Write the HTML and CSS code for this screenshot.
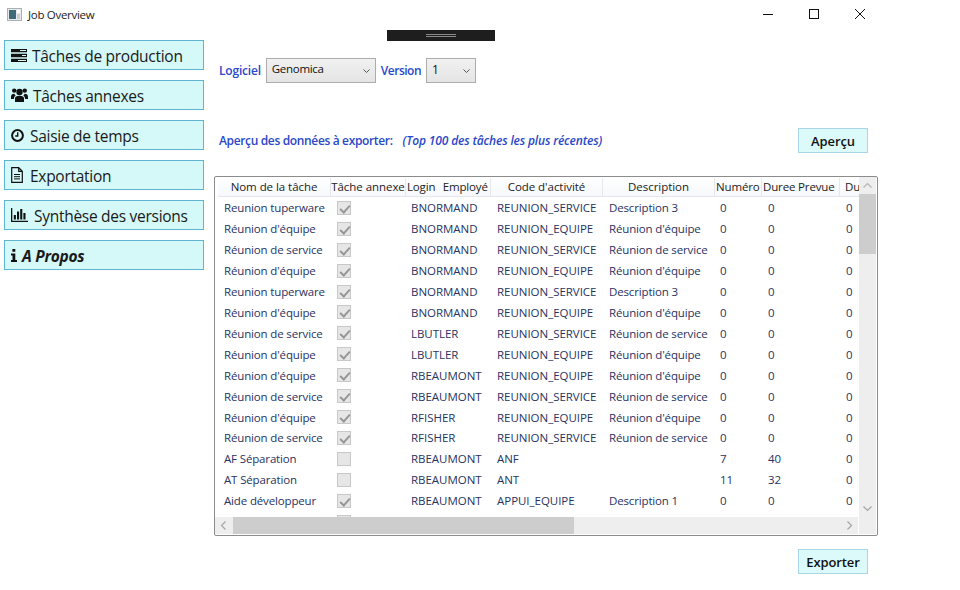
FILE: index.html
```html
<!DOCTYPE html>
<html lang="fr">
<head>
<meta charset="utf-8">
<title>Job Overview</title>
<link rel="stylesheet" href="styles.css">
</head>
<body>
<div class="window">
  <header class="titlebar">
    <svg class="app-icon" width="15" height="13" viewBox="0 0 15 13"><rect x="0.5" y="0.5" width="14" height="12" fill="#e8eaec" stroke="#a9b0b6"/><rect x="2" y="2" width="7" height="9" fill="#3f6a78"/><rect x="10" y="2" width="3" height="3" fill="#fff"/><rect x="10" y="6" width="3" height="5" fill="#c9ced2"/></svg>
    <span class="app-title">Job Overview</span>
    <div class="controls">
      <svg width="13" height="12" viewBox="0 0 13 12"><path d="M2 6.500h10" stroke="#111" fill="none"/></svg>
      <svg width="12" height="12" viewBox="0 0 12 12"><rect x="1.500" y="1.500" width="9" height="9" stroke="#111" fill="none"/></svg>
      <svg width="12" height="12" viewBox="0 0 12 12"><path d="M1 1l10 10M11 1L1 11" stroke="#111" fill="none"/></svg>
    </div>
  </header>
  <div class="grip"><span class="grip-lines"></span></div>
  <div class="content">
    <nav class="sidebar">
      <a class="nav-btn"><svg class="i" width="16" height="13" viewBox="0 0 16 13"><path fill="#111" d="M0 0h16v3.200H0zM0 4.800h16v3.400H0zM0 9.800h16V13H0z"/><path fill="#d5f8f8" d="M9 1h6v1H9zM11 6h4v1h-4zM7 11h8v1H7z"/></svg><span>Tâches de production</span></a>
      <a class="nav-btn"><svg class="i" width="17" height="16" viewBox="0 0 17 16"><circle cx="8.500" cy="5" r="3.200" fill="#111"/><circle cx="3.200" cy="3.600" r="2.200" fill="#111"/><circle cx="13.800" cy="3.600" r="2.200" fill="#111"/><path fill="#111" d="M4 15v-3.500C4 9.500 5.500 8.700 8.500 8.700s4.500.8 4.500 2.800V15zM0 10c0-2.500 1.200-3.200 3.400-3.200.4 1 .8 1.500 1.300 2C3.500 9.400 2.900 10.600 2.900 12H0zM17 10c0-2.500-1.200-3.200-3.400-3.200-.4 1-.8 1.500-1.300 2 1.200.6 1.800 1.800 1.800 3.200H17z"/></svg><span>Tâches annexes</span></a>
      <a class="nav-btn gap-6"><svg class="i" width="13" height="13" viewBox="0 0 13 13"><circle cx="6.500" cy="6.500" r="5.400" fill="none" stroke="#111" stroke-width="2"/><path d="M6.700 3.200v3.800H4.200" fill="none" stroke="#111" stroke-width="1.400"/></svg><span>Saisie de temps</span></a>
      <a class="nav-btn gap-7"><svg class="i" width="12" height="16" viewBox="0 0 12 16"><path d="M.7.7h7l3.600 3.600v11H.7z M7.700.7v3.600h3.600" fill="none" stroke="#111" stroke-width="1.200"/><path d="M3 7.500h6M3 9.700h6M3 11.900h6" stroke="#111" stroke-width="1"/></svg><span>Exportation</span></a>
      <a class="nav-btn gap-6"><svg class="i" width="17" height="14" viewBox="0 0 17 14"><path fill="#111" d="M0 0h1.300v12.700H17V14H0z"/><path fill="#111" d="M2.800 7h2.100v4.500H2.800zM6 3.500h2.100v8H6zM9.200 1h2.100v10.500H9.200zM12.400 5h2.100v6.500h-2.100z"/></svg><span>Synthèse des versions</span></a>
      <a class="nav-btn nav-active"><svg class="i" width="6" height="13" viewBox="0 0 6 13"><path fill="#111" d="M1.400 0h2.900v2.800H1.400zM0 4.600h4.300v6.400H6v2H0v-2h1.500V6.600H0z"/></svg><span>A Propos</span></a>
    </nav>
    <main class="main">
      <div class="filters">
        <label class="field-label">Logiciel</label>
        <div class="combo combo-soft"><span>Genomica</span><svg class="chev" width="7" height="4" viewBox="0 0 7 4"><path d="M.5.5l3 3 3-3" fill="none" stroke="#555"/></svg></div>
        <label class="field-label label-version">Version</label>
        <div class="combo combo-ver"><span>1</span><svg class="chev" width="7" height="4" viewBox="0 0 7 4"><path d="M.5.5l3 3 3-3" fill="none" stroke="#555"/></svg></div>
      </div>
      <div class="preview-row">
        <span class="field-label">Aperçu des données à exporter:</span>
        <em class="field-label hint">(Top 100 des tâches les plus récentes)</em>
        <button class="action">Aperçu</button>
      </div>
      <section class="grid-box">
        <div class="grid-top">
          <div class="sheet">
            <div class="row head"><span>Nom de la tâche</span><span>Tâche annexe</span><span class="left login">Login&nbsp; Employé</span><span>Code d'activité</span><span>Description</span><span class="left">Numéro</span><span class="left">Duree Prevue</span><span class="left">Duree</span></div>
            <div class="row"><span>Reunion tuperware</span><i class="ck on"></i><span class="caps">BNORMAND</span><span class="caps">REUNION_SERVICE</span><span>Description 3</span><span class="num">0</span><span>0</span><span>0</span></div>
            <div class="row"><span>Réunion d'équipe</span><i class="ck on"></i><span class="caps">BNORMAND</span><span class="caps">REUNION_EQUIPE</span><span>Réunion d'équipe</span><span class="num">0</span><span>0</span><span>0</span></div>
            <div class="row"><span>Réunion de service</span><i class="ck on"></i><span class="caps">BNORMAND</span><span class="caps">REUNION_SERVICE</span><span>Réunion de service</span><span class="num">0</span><span>0</span><span>0</span></div>
            <div class="row"><span>Réunion d'équipe</span><i class="ck on"></i><span class="caps">BNORMAND</span><span class="caps">REUNION_EQUIPE</span><span>Réunion d'équipe</span><span class="num">0</span><span>0</span><span>0</span></div>
            <div class="row"><span>Reunion tuperware</span><i class="ck on"></i><span class="caps">BNORMAND</span><span class="caps">REUNION_SERVICE</span><span>Description 3</span><span class="num">0</span><span>0</span><span>0</span></div>
            <div class="row"><span>Réunion d'équipe</span><i class="ck on"></i><span class="caps">BNORMAND</span><span class="caps">REUNION_EQUIPE</span><span>Réunion d'équipe</span><span class="num">0</span><span>0</span><span>0</span></div>
            <div class="row"><span>Réunion de service</span><i class="ck on"></i><span class="caps">LBUTLER</span><span class="caps">REUNION_SERVICE</span><span>Réunion de service</span><span class="num">0</span><span>0</span><span>0</span></div>
            <div class="row"><span>Réunion d'équipe</span><i class="ck on"></i><span class="caps">LBUTLER</span><span class="caps">REUNION_EQUIPE</span><span>Réunion d'équipe</span><span class="num">0</span><span>0</span><span>0</span></div>
            <div class="row"><span>Réunion d'équipe</span><i class="ck on"></i><span class="caps">RBEAUMONT</span><span class="caps">REUNION_EQUIPE</span><span>Réunion d'équipe</span><span class="num">0</span><span>0</span><span>0</span></div>
            <div class="row"><span>Réunion de service</span><i class="ck on"></i><span class="caps">RBEAUMONT</span><span class="caps">REUNION_SERVICE</span><span>Réunion de service</span><span class="num">0</span><span>0</span><span>0</span></div>
            <div class="row"><span>Réunion d'équipe</span><i class="ck on"></i><span class="caps">RFISHER</span><span class="caps">REUNION_EQUIPE</span><span>Réunion d'équipe</span><span class="num">0</span><span>0</span><span>0</span></div>
            <div class="row"><span>Réunion de service</span><i class="ck on"></i><span class="caps">RFISHER</span><span class="caps">REUNION_SERVICE</span><span>Réunion de service</span><span class="num">0</span><span>0</span><span>0</span></div>
            <div class="row"><span>AF Séparation</span><i class="ck"></i><span class="caps">RBEAUMONT</span><span class="caps">ANF</span><span></span><span class="num">7</span><span>40</span><span>0</span></div>
            <div class="row"><span>AT Séparation</span><i class="ck"></i><span class="caps">RBEAUMONT</span><span class="caps">ANT</span><span></span><span class="num">11</span><span>32</span><span>0</span></div>
            <div class="row"><span>Aide développeur</span><i class="ck on"></i><span class="caps">RBEAUMONT</span><span class="caps">APPUI_EQUIPE</span><span>Description 1</span><span class="num">0</span><span>0</span><span>0</span></div>
            <div class="row"><span></span><i class="ck"></i></div>
          </div>
          <div class="vscroll">
            <svg class="arrow" width="17" height="17" viewBox="0 0 17 17"><path d="M4.500 10.500l4-4 4 4" fill="none" stroke="#b5b5b5" stroke-width="1.200"/></svg>
            <div class="vthumb"></div>
            <svg class="arrow arrow-end" width="17" height="17" viewBox="0 0 17 17"><path d="M4.500 6.500l4 4 4-4" fill="none" stroke="#a5a5a5" stroke-width="1.200"/></svg>
          </div>
        </div>
        <div class="grid-bottom">
          <div class="hscroll">
            <svg class="arrow" width="17" height="17" viewBox="0 0 17 17"><path d="M10.500 4.500l-4 4 4 4" fill="none" stroke="#a5a5a5" stroke-width="1.200"/></svg>
            <div class="hthumb"></div>
            <svg class="arrow arrow-right" width="17" height="17" viewBox="0 0 17 17"><path d="M6.500 4.500l4 4-4 4" fill="none" stroke="#a5a5a5" stroke-width="1.200"/></svg>
          </div>
          <div class="corner"></div>
        </div>
      </section>
      <div class="footer"><button class="action">Exporter</button></div>
    </main>
  </div>
</div>
</body>
</html>
```
FILE: styles.css
```css
* { box-sizing: border-box; }
html, body { margin: 0; height: 100%; background: #fff; overflow: hidden; }
body { font-family: "Open Sans", "Noto Sans", sans-serif; font-size: 12px; color: #111; }
.window { width: 882px; height: 590px; position: relative; display: flex; flex-direction: column; }

.titlebar { height: 30px; display: flex; align-items: center; padding: 0 0 2px 7px; }
.app-icon { margin-right: 6px; }
.app-title { font-size: 11.5px; letter-spacing: -0.3px; color: #222; }
.controls { margin-left: auto; display: flex; align-self: flex-start; gap: 34px; padding: 8px 16px 0 0; }

.grip { position: absolute; left: 387px; top: 30px; width: 108px; height: 11px; background: #1e1e1e; display: flex; align-items: center; justify-content: center; }
.grip-lines { width: 30px; height: 3px; border-top: 1px solid #8a8a8a; border-bottom: 1px solid #8a8a8a; }

.content { flex: 1; display: flex; }
.sidebar { width: 214px; padding: 10px 10px 0 4px; display: flex; flex-direction: column; gap: 10px; }
.nav-btn { height: 30px; display: flex; align-items: center; gap: 5px; padding-left: 6px; background: #d5f8f8; border: 1px solid #5eb4d2; font-size: 15.5px; letter-spacing: -0.28px; color: #1a1a1a; }
.nav-btn span { padding-top: 2px; }
.gap-6 { gap: 6px; }
.gap-7 { gap: 7px; }
.i { flex: none; }
.nav-active { font-weight: 700; font-style: italic; font-size: 15.5px; letter-spacing: -0.25px; }

.main { flex: 1; min-width: 0; display: flex; flex-direction: column; }
.filters { height: 25px; margin-top: 28px; padding-left: 5px; display: flex; align-items: center; gap: 5px; }
.field-label { font-size: 12px; font-weight: 600; letter-spacing: -0.35px; color: #2a48c8; font-style: normal; }
.filters .field-label { letter-spacing: -0.2px; }
.filters .label-version { letter-spacing: -0.5px; }
.combo { height: 25px; display: flex; justify-content: space-between; padding: 2px 5px 0 5px; background: linear-gradient(#f1f1f1, #e4e4e4); border: 1px solid #acacac; font-size: 11.5px; letter-spacing: -0.3px; color: #111; }
.combo-soft { width: 110px; }
.combo-ver { width: 50px; font-size: 12px; }
.chev { margin-top: 8px; }

.preview-row { height: 25px; margin-top: 45px; padding-left: 5px; display: flex; align-items: center; }
.field-label.hint { font-style: italic; margin-left: 10px; letter-spacing: -0.15px; }
.action { width: 70px; height: 25px; padding: 0; background: #dcfafa; border: 1px solid #a9d6e6; font: 600 13px "Open Sans", sans-serif; letter-spacing: -0.12px; color: #111; }
.preview-row .action { margin-left: auto; margin-right: 14px; }

.grid-box { width: 664px; height: 360px; margin-top: 23px; border: 1px solid #8c8c8c; border-radius: 2px; padding: 0 1px 1px 0; display: flex; flex-direction: column; }
.grid-top { flex: 1; min-height: 0; display: flex; }
.sheet { flex: 1; min-width: 0; overflow: hidden; padding-left: 3px; }
.row { display: grid; grid-template-columns: 113px 75px 85px 112px 112px 47px 78px 30px; height: 20.92px; align-items: center; font-size: 11.5px; letter-spacing: -0.15px; color: #28335f; white-space: nowrap; }
.row > span { padding-left: 6px; overflow: hidden; }
.row > .num { padding-left: 5px; }
.row > .caps { letter-spacing: -0.03px; }
.row > .caps:nth-of-type(2) { padding-left: 5px; }
.head { height: 20px; margin-bottom: 0.5px; background: linear-gradient(#fff, #f6f8fb); border-bottom: 1px solid #e3e6ea; color: #222; letter-spacing: -0.05px; }
.head > span { text-align: center; padding: 0; border-right: 1px solid #e6e8ec; line-height: 18px; height: 18px; }
.row.head > .left { text-align: left; padding-left: 1px; letter-spacing: -0.15px; }
.row.head > .login { word-spacing: 0.8px; }
.row.head > span:last-child { padding-left: 5px; border: 0; }
.ck { width: 14px; height: 14px; margin-left: 6px; background: #e6e6e6; border: 1px solid #c8c8c8; position: relative; display: block; }
.ck.on::after { content: ""; position: absolute; left: 4px; top: 1px; width: 4px; height: 8px; border: solid #969696; border-width: 0 2px 2px 0; transform: rotate(42deg); }

.vscroll { width: 17px; background: #eeeeee; display: flex; flex-direction: column; }
.vthumb { height: 60px; background: #cdcdcd; }
.arrow { flex: none; display: block; }
.arrow-end { margin-top: auto; }
.arrow-right { margin-left: auto; }
.grid-bottom { height: 17px; display: flex; }
.hscroll { flex: 1; background: #eeeeee; display: flex; }
.hthumb { width: 341px; margin-left: 1px; background: #cdcdcd; }
.corner { width: 17px; margin-left: 1px; background: #eeeeee; }

.footer { margin-top: 13px; padding-left: 584px; }
```
